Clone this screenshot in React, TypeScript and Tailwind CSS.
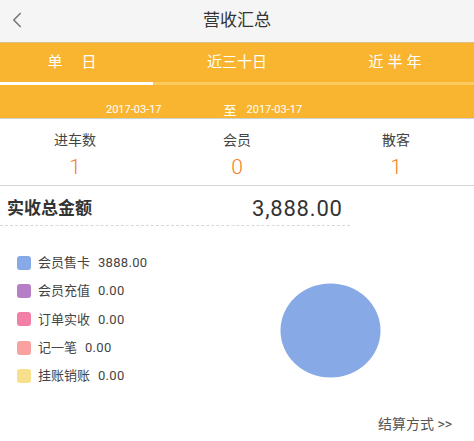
import { ChevronLeft } from 'lucide-react'

const legend = [
  { name: '会员售卡', value: '3888.00', color: 'bg-[#87a9e5]' },
  { name: '会员充值', value: '0.00', color: 'bg-[#b67fc5]' },
  { name: '订单实收', value: '0.00', color: 'bg-[#f27fa6]' },
  { name: '记一笔', value: '0.00', color: 'bg-[#f9a1a1]' },
  { name: '挂账销账', value: '0.00', color: 'bg-[#f7df8c]' },
]

const stats = [
  { label: '进车数', value: '1' },
  { label: '会员', value: '0' },
  { label: '散客', value: '1' },
]

export default function App() {
  return (
    <div className="w-[474px] h-[441px] bg-white overflow-hidden font-['Roboto','Noto_Sans_CJK_SC',sans-serif]">
      {/* Header */}
      <div className="relative flex h-[43px] items-center justify-center bg-[#f5f5f5] border-b border-[#dcc08a]">
        <ChevronLeft size={26} strokeWidth={1.5} className="absolute left-[4px] top-[7px] text-[#777]" />
        <span className="text-[17px] text-[#333]">营收汇总</span>
      </div>

      {/* Tabs + date */}
      <div className="bg-[#f9b52f] border-b border-[#d0d0d0]">
        <div className="flex h-[39px] items-center text-[15px] text-white">
          <div className="flex w-[158px] justify-center pr-[14px] gap-[19px]">
            <span>单</span>
            <span>日</span>
          </div>
          <div className="flex w-[158px] justify-center">近三十日</div>
          <div className="flex w-[158px] justify-center gap-[4px]">
            <span>近</span>
            <span>半</span>
            <span>年</span>
          </div>
        </div>
        <div className="flex h-[3px] bg-[#fbcb5f]">
          <div className="w-[153px] bg-white" />
        </div>
        <div className="flex h-[33px] items-center pl-[106px] pt-[18px] text-[11px] text-white">
          <span>2017-03-17</span>
          <span className="ml-[62px] text-[13px]">至</span>
          <span className="ml-[10px]">2017-03-17</span>
        </div>
      </div>

      {/* Stats */}
      <div className="flex h-[67px] border-b border-[#d4d4d4] pt-[12px]">
        {stats.map((s, i) => (
          <div key={s.label} className={`flex w-[158px] flex-col items-center ${i === 0 ? 'pr-[8px]' : i === 2 ? 'pl-[2px]' : ''}`}>
            <span className="text-[14px] leading-[18px] text-[#444]">{s.label}</span>
            <span className="mt-[6px] text-[21px] leading-[24px] font-light text-[#f57f22]">{s.value}</span>
          </div>
        ))}
      </div>

      {/* Total */}
      <div className="flex h-[40px] w-[350px] items-center pt-[6px] border-b border-dashed border-[#d8d8d8]">
        <span className="ml-[7px] text-[17px] font-bold text-[#333]">实收总金额</span>
        <span className="ml-[160px] text-[22px] tracking-[0.8px] text-[#333]">3,888.00</span>
      </div>

      {/* Chart */}
      <div className="relative flex h-[214px]">
        <div className="flex flex-col gap-[11.4px] pl-[17px] pt-[28px]">
          {legend.map(l => (
            <div key={l.name} className="flex h-[17px] items-center text-[13px] text-[#444]">
              <span className={`h-[14px] w-[14px] rounded-[3px] ${l.color}`} />
              <span className="ml-[7px]">{l.name}</span>
              <span className="ml-[8px] tracking-[0.3px]">{l.value}</span>
            </div>
          ))}
        </div>
        <svg className="absolute left-[280px] top-[57px]" width="101" height="95" viewBox="0 0 101 95">
          <ellipse cx="50.5" cy="47.5" rx="50" ry="47" fill="#87a9e5" />
        </svg>
        <span className="absolute left-[378px] top-[188px] text-[14px] text-[#555]">结算方式 &gt;&gt;</span>
      </div>
    </div>
  )
}
